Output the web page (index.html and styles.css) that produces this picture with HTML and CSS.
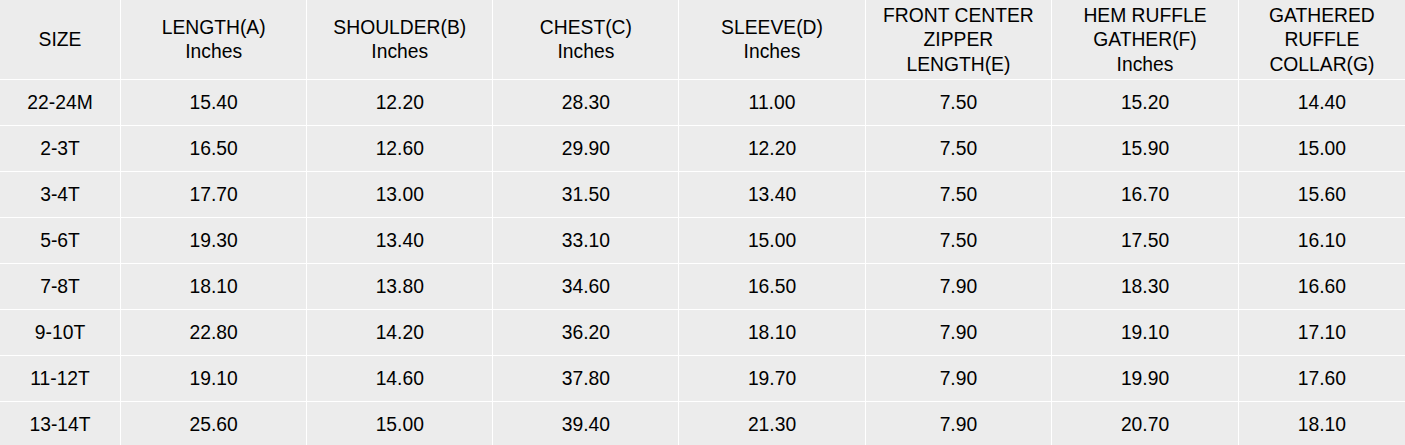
FILE: index.html
```html
<!DOCTYPE html>
<html lang="en">
<head>
<meta charset="utf-8">
<title>Size Chart</title>
<link rel="stylesheet" href="styles.css">
</head>
<body>
<table class="size-table">
  <colgroup>
    <col class="c-size">
    <col class="c-mid">
    <col class="c-mid">
    <col class="c-mid">
    <col class="c-mid">
    <col class="c-wide">
    <col class="c-wide">
    <col class="c-last">
  </colgroup>
  <thead>
    <tr class="head-row">
      <th>SIZE</th>
      <th>LENGTH(A)<br>Inches</th>
      <th>SHOULDER(B)<br>Inches</th>
      <th>CHEST(C)<br>Inches</th>
      <th>SLEEVE(D)<br>Inches</th>
      <th>FRONT CENTER<br>ZIPPER<br>LENGTH(E)</th>
      <th>HEM RUFFLE<br>GATHER(F)<br>Inches</th>
      <th>GATHERED<br>RUFFLE<br>COLLAR(G)</th>
    </tr>
  </thead>
  <tbody>
    <tr><td>22-24M</td><td>15.40</td><td>12.20</td><td>28.30</td><td>11.00</td><td>7.50</td><td>15.20</td><td>14.40</td></tr>
    <tr><td>2-3T</td><td>16.50</td><td>12.60</td><td>29.90</td><td>12.20</td><td>7.50</td><td>15.90</td><td>15.00</td></tr>
    <tr><td>3-4T</td><td>17.70</td><td>13.00</td><td>31.50</td><td>13.40</td><td>7.50</td><td>16.70</td><td>15.60</td></tr>
    <tr><td>5-6T</td><td>19.30</td><td>13.40</td><td>33.10</td><td>15.00</td><td>7.50</td><td>17.50</td><td>16.10</td></tr>
    <tr><td>7-8T</td><td>18.10</td><td>13.80</td><td>34.60</td><td>16.50</td><td>7.90</td><td>18.30</td><td>16.60</td></tr>
    <tr><td>9-10T</td><td>22.80</td><td>14.20</td><td>36.20</td><td>18.10</td><td>7.90</td><td>19.10</td><td>17.10</td></tr>
    <tr><td>11-12T</td><td>19.10</td><td>14.60</td><td>37.80</td><td>19.70</td><td>7.90</td><td>19.90</td><td>17.60</td></tr>
    <tr><td>13-14T</td><td>25.60</td><td>15.00</td><td>39.40</td><td>21.30</td><td>7.90</td><td>20.70</td><td>18.10</td></tr>
  </tbody>
</table>
</body>
</html>
```
FILE: styles.css
```css
html, body {
  margin: 0;
  padding: 0;
  overflow: hidden;
  background: #ececec;
}

.size-table {
  width: 1405px;
  table-layout: fixed;
  border-collapse: collapse;
  border-style: hidden;
  background: #ececec;
  font-family: "Liberation Sans", Arial, sans-serif;
  font-size: 19.3px;
  color: #000;
}

.c-size { width: 120.5px; }
.c-mid { width: 186px; }
.c-wide { width: 186.5px; }
.c-last { width: 166.5px; }

.size-table th,
.size-table td {
  border: 1px solid #ffffff;
  text-align: center;
  vertical-align: middle;
  padding: 2px 0 0 0;
  font-weight: normal;
}

.size-table th {
  line-height: 24.5px;
}

.head-row {
  height: 79px;
}

.size-table tbody tr {
  height: 46px;
}
```
